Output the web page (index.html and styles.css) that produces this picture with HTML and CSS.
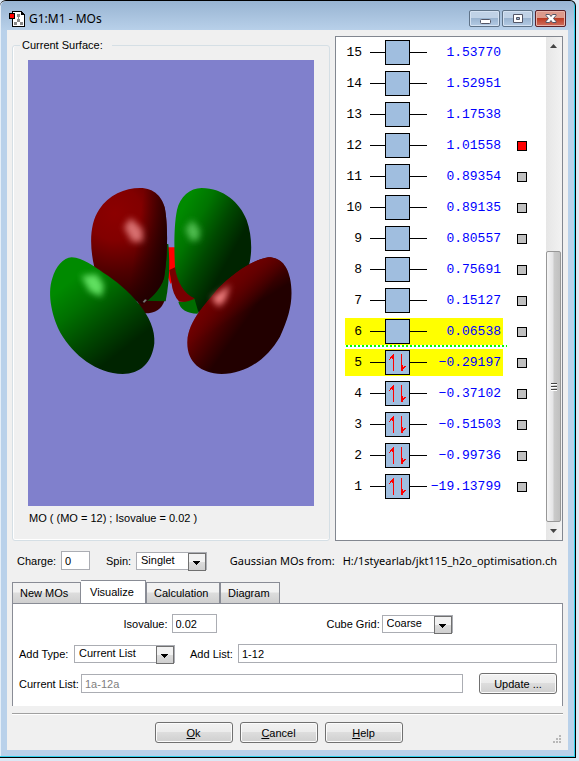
FILE: index.html
```html
<!DOCTYPE html>
<html lang="en">
<head>
  <meta charset="UTF-8" />
  <meta name="viewport" content="width=device-width, initial-scale=1" />
  <title>G1:M1 - MOs</title>
  <link rel="stylesheet" href="styles.css">
</head>
<body>

  <div class="window">
    <header class="titlebar">
      <svg class="app-icon" width="16" height="16" viewBox="0 0 16 16" shape-rendering="crispEdges">
        <path d="M3.5 .5h9l3 3v12h-12z" fill="#fff" stroke="#000" />
        <path d="M12 1h1v1h1v1h1v1h-3z" fill="#000" />
        <path d="M9 5h1v5h-1zM8 9h1v2h-1zM10 9h1v2h-1zM7 11h1v1h-1zM11 11h1v1h-1z" fill="#888" />
        <path d="M8 3h3v3h-3zM8 8h3v3h-3zM5 11h3v3h-3zM11 11h3v3h-3z" fill="#888" />
        <path d="M.5 2.5h5v5h-5z" fill="#f00" stroke="#000" />
      </svg>
      <h1>G1:M1 - MOs</h1>
      <div class="caption-buttons">
        <button type="button" aria-label="Minimize">
          <svg width="12" height="12" viewBox="0 0 12 12"><rect x="1.5" y="6.5" width="10" height="4" rx="1" fill="#fff" stroke="#535666" /></svg>
        </button>
        <button type="button" aria-label="Maximize">
          <svg width="12" height="12" viewBox="0 0 12 12"><path d="M1.5 1.5h9v8h-9zM4.5 4.5v2h3v-2z" fill="#fff" fill-rule="evenodd" stroke="#535666" /></svg>
        </button>
        <button type="button" class="close" aria-label="Close">
          <svg width="12" height="12" viewBox="0 0 12 12"><path d="M1 1.5h3.5l1.5 2 1.5-2h3.5v1l-2.500 3 2.500 3v1h-3.500l-1.500-2-1.500 2h-3.500v-1l2.500-3-2.500-3z" fill="#fff" stroke="#535666" /></svg>
        </button>
      </div>
    </header>

    <main class="client">
      <div class="views">
        <fieldset class="surface">
          <legend>Current Surface:</legend>
          <svg class="scene" viewBox="0 0 286 446" role="img" aria-label="Molecular orbital 12">
            <defs>
              <radialGradient id="redBack" gradientUnits="userSpaceOnUse" cx="225" cy="130" r="270">
                <stop offset="0" stop-color="#8c0000" />
                <stop offset=".3" stop-color="#820000" />
                <stop offset=".65" stop-color="#500000" />
                <stop offset="1" stop-color="#280000" />
              </radialGradient>
              <linearGradient id="redEdge" gradientUnits="userSpaceOnUse" x1="290" y1="200" x2="385" y2="215">
                <stop offset="0" stop-color="#200000" stop-opacity="0" />
                <stop offset="1" stop-color="#200000" />
              </linearGradient>
              <linearGradient id="greenBack" gradientUnits="userSpaceOnUse" x1="420" y1="130" x2="590" y2="225">
                <stop offset="0" stop-color="#008a00" />
                <stop offset=".3" stop-color="#007400" />
                <stop offset=".65" stop-color="#004800" />
                <stop offset="1" stop-color="#002400" />
              </linearGradient>
              <linearGradient id="greenFront" gradientUnits="userSpaceOnUse" x1="95" y1="330" x2="255" y2="535">
                <stop offset="0" stop-color="#008a00" />
                <stop offset=".3" stop-color="#007000" />
                <stop offset=".65" stop-color="#004800" />
                <stop offset="1" stop-color="#002400" />
              </linearGradient>
              <linearGradient id="redFront" gradientUnits="userSpaceOnUse" x1="500" y1="365" x2="620" y2="450">
                <stop offset="0" stop-color="#800000" />
                <stop offset=".35" stop-color="#600000" />
                <stop offset=".75" stop-color="#380000" />
                <stop offset="1" stop-color="#220000" />
              </linearGradient>
              <linearGradient id="redTop" gradientUnits="userSpaceOnUse" x1="640" y1="275" x2="700" y2="370">
                <stop offset="0" stop-color="#6c0000" />
                <stop offset="1" stop-color="#6c0000" stop-opacity="0" />
              </linearGradient>
              <filter id="soft" x="-50%" y="-50%" width="200%" height="200%">
                <feGaussianBlur stdDeviation="9" />
              </filter>
            </defs>
            <g transform="translate(12 110) scale(.3333)">
              <!-- oxygen atom and inner lobes -->
              <path d="M384 232h22v90l-14 20-12-30z" fill="#f00" />
              <path d="M388 300l20-10 65 95-25 12-30-2q-20-20-24-60z" fill="#780000" />
              <path d="M415 395q25 4 52-10l12 20-6 26q-50-2-58-36z" fill="#006c00" />
              <path d="M290 390h84q-12 42-64 40z" fill="#380000" />
              <path d="M376 222h9q8 90-8 172l-68-2z" fill="#005400" />
              <!-- back lobes -->
              <path d="M300 54C345 54 366 84 374 112C384 160 384 255 372 325C360 362 330 388 308 402L240 370L163 292C150 235 146 165 178 118C205 75 255 54 300 54Z" fill="url(#redBack)" />
              <path d="M300 54C345 54 366 84 374 112C384 160 384 255 372 325C360 362 330 388 308 402L240 370L163 292C150 235 146 165 178 118C205 75 255 54 300 54Z" fill="url(#redEdge)" />
              <path d="M485 54C550 54 600 98 620 150C636 195 637 245 628 282L580 370L476 430L463 385C432 370 410 335 405 290C402 230 402 165 411 120C420 80 450 54 485 54Z" fill="url(#greenBack)" />
              <!-- front lobes -->
              <path d="M95 262C130 264 160 288 190 308C265 355 350 440 343 520C336 580 300 612 248 612C170 612 100 555 62 490C38 445 20 375 37 325C47 290 70 263 95 262Z" fill="url(#greenFront)" />
              <path d="M685 262C725 262 743 292 750 325C762 385 750 435 720 500C680 570 615 612 545 612C480 610 440 575 442 515C445 450 500 400 535 355C580 310 640 268 685 262Z" fill="url(#redFront)" />
              <path d="M685 262C725 262 743 292 750 325C762 385 750 435 720 500C680 570 615 612 545 612C480 610 440 575 442 515C445 450 500 400 535 355C580 310 640 268 685 262Z" fill="url(#redTop)" />
              <!-- highlights -->
              <g filter="url(#soft)">
                <path d="M252 172l20-28 35 34 2 36-32 2z" fill="#d87070" />
                <path d="M436 178l20-28 24 30-4 30-24 2z" fill="#50bc50" />
                <path d="M124 318l46-6 22 34-8 34-36-16z" fill="#60e060" />
                <path d="M514 384l56-40-14 46-20 20z" fill="#f08080" />
              </g>
              <path d="M308 396l7-8 6 2-8 8z" fill="#777" />
            </g>
          </svg>
          <p class="caption">MO ( (MO = 12) ; Isovalue = 0.02 )</p>
        </fieldset>

        <div class="mo-list">
          <table>
            <tbody id="orbitals"></tbody>
          </table>
          <div class="scrollbar">
            <button type="button" aria-label="Scroll up"><svg width="7" height="4" viewBox="0 0 7 4"><path d="M0 4l3.500-4 3.500 4z" fill="#444" /></svg></button>
            <div class="track"><div class="thumb"><i></i><i></i><i></i></div></div>
            <button type="button" aria-label="Scroll down"><svg width="7" height="4" viewBox="0 0 7 4"><path d="M0 0l3.500 4 3.500-4z" fill="#444" /></svg></button>
          </div>
        </div>
      </div>

      <div class="state">
        <label for="charge" class="label-charge">Charge:</label>
        <input type="text" id="charge" class="field charge" value="0">
        <label for="spin" class="label-spin">Spin:</label>
        <span class="combo spin"><select id="spin"><option>Singlet</option></select></span>
        <span class="source"><span>Gaussian MOs from:</span> <span>H:/1styearlab/jkt115_h2o_optimisation.ch</span></span>
      </div>

      <div class="tabs" role="tablist">
        <button type="button" role="tab" class="tab-new">New MOs</button>
        <button type="button" role="tab" class="tab-vis active" aria-selected="true">Visualize</button>
        <button type="button" role="tab" class="tab-calc">Calculation</button>
        <button type="button" role="tab" class="tab-diag">Diagram</button>
      </div>

      <section class="panel" role="tabpanel">
        <div class="row centered">
          <div class="pair">
            <label for="iso" class="label-iso">Isovalue:</label>
            <input type="text" id="iso" class="field iso" value="0.02">
          </div>
          <div class="pair">
            <label for="grid" class="label-type">Cube Grid:</label>
            <span class="combo grid"><select id="grid"><option>Coarse</option></select></span>
          </div>
        </div>
        <div class="row">
          <label for="addType" class="label-type">Add Type:</label>
          <span class="combo type"><select id="addType"><option>Current List</option></select></span>
          <label for="addList" class="label-iso">Add List:</label>
          <input type="text" id="addList" class="field wide" value="1-12">
        </div>
        <div class="row">
          <label for="currentList" class="label-current">Current List:</label>
          <input type="text" id="currentList" class="field wide" value="1a-12a" disabled>
          <button type="button" class="push update">Update ...</button>
        </div>
      </section>

      <footer class="actions">
        <button type="button" class="push"><u>O</u>k</button>
        <button type="button" class="push"><u>C</u>ancel</button>
        <button type="button" class="push"><u>H</u>elp</button>
        <svg class="grip" width="8" height="8" viewBox="0 0 8 8" fill="#b8b8b8"><path d="M6 0h2v2h-2zM3 3h2v2h-2zM6 3h2v2h-2zM0 6h2v2h-2zM3 6h2v2h-2zM6 6h2v2h-2z" /></svg>
      </footer>
    </main>
  </div>

  <script>
    const orbitals = [
      [15, '1.53770'], [14, '1.52951'], [13, '1.17538'], [12, '1.01558'], [11, '0.89354'],
      [10, '0.89135'], [9, '0.80557'], [8, '0.75691'], [7, '0.15127'], [6, '0.06538'],
      [5, '−0.29197'], [4, '−0.37102'], [3, '−0.51503'], [2, '−0.99736'], [1, '−19.13799']
    ];
    const shown = 12;

    const electrons = `
      <svg width="23" height="23" viewBox="0 0 23 23" fill="#f00" shape-rendering="crispEdges">
        <path d="M7 3h1v17h-1zM15 3h1v17h-1z" />
        <path d="M7 3v5h-1v-1h-1v1h-1v1h-1v-1h1v-2h1v-1h1v-1h1zM16 20v-6h1v2h1v-1h2v1h-1v1h-1v1h-1v2z" />
      </svg>`;

    document.getElementById('orbitals').innerHTML = orbitals.map(([n, energy]) => {
      const row = n === 6 ? 'lumo' : n === 5 ? 'homo' : '';
      const box = n <= 5 ? electrons : '';
      const mark = n <= 12
        ? `<input type="checkbox" aria-label="Surface for MO ${n}" ${n === shown ? 'checked' : ''}>`
        : '';
      return `
        <tr class="${row}">
          <td class="index">${n}</td>
          <td class="level"><div class="line"><div class="box">${box}</div></div></td>
          <td class="energy">${energy}</td>
          <td class="mark">${mark}</td>
        </tr>`;
    }).join('');
  </script>

</body>
</html>
```

FILE: styles.css
```css
* {
  box-sizing: border-box;
}
body {
  margin: 0;
  padding: 0 3px 3px 0;
  min-height: 100vh;
  display: flex;
  background: #dce8f5;
  color: #000;
  font-family: "Liberation Sans", Arial, sans-serif;
  font-size: 11px;
  line-height: 14px;
}
button, input, select {
  font: inherit;
  color: inherit;
  margin: 0;
}

/* Window frame */
.window {
  flex: 1;
  display: flex;
  flex-direction: column;
  padding: 0 7px 7px 7px;
  background: linear-gradient(#98b4d2, #b9d1ea 30px);
  border: 1px solid #000;
  border-left: 0;
  border-radius: 6px 6px 0 0;
  box-shadow: inset -1px -1px 0 #30d0ec, inset 1px 0 0 #e4eef8;
}
.titlebar {
  display: flex;
  align-items: center;
  height: 29px;
  padding: 6px 2px 0;
}
.titlebar h1 {
  flex: 1;
  margin: 0 0 0 4px;
  font-family: "Noto Sans", "Open Sans", sans-serif;
  font-size: 12px;
  font-weight: normal;
}
.caption-buttons {
  display: flex;
  gap: 2px;
}
.caption-buttons button {
  display: flex;
  align-items: center;
  justify-content: center;
  width: 31px;
  height: 17px;
  padding: 0;
  border: 1px solid #5f7388;
  border-radius: 2px;
  background: linear-gradient(#c0d2e6 50%, #9ab4d0 50%, #b4cbe4);
  box-shadow: inset 0 0 0 1px #d4e2f2;
}
.caption-buttons .close {
  border-color: #5a2028;
  background: linear-gradient(#dc9a8c 50%, #bc3c24 50%, #d07060);
  box-shadow: inset 0 0 0 1px #e8b4aa;
}
.client {
  flex: 1;
  display: flex;
  flex-direction: column;
  padding: 6px 5px 7px;
  background: #f0f0f0;
}

/* Surface view */
.views {
  flex: 1;
  display: flex;
  gap: 5px;
}
.surface {
  flex: 1;
  display: flex;
  flex-direction: column;
  min-width: 0;
  margin: 2px 0 0;
  padding: 8px 15px 15px;
  border: 1px solid #d5dfe5;
  border-radius: 3px;
  box-shadow: inset 1px 0 0 #fff, inset 0 -1px 0 #fff;
}
.surface legend {
  margin-left: -8px;
  padding: 0 9px 0 2px;
}
.scene {
  flex: 1;
  min-height: 0;
  width: 100%;
  background: #8080cc;
}
.caption {
  margin: 5px 0 0 1px;
}

/* Orbital list */
.mo-list {
  display: flex;
  width: 228px;
  border: 1px solid #828790;
  background: #fff;
}
table {
  flex: 1;
  align-self: flex-start;
  border-collapse: collapse;
  font-family: "Liberation Mono", monospace;
  font-size: 13px;
}
td {
  height: 31px;
  padding: 0;
}
.index {
  width: 34px;
  padding-right: 8px;
  text-align: right;
}
.level {
  width: 57px;
}
.line {
  display: flex;
  padding-left: 15px;
  background: linear-gradient(#000, #000) center / 100% 1px no-repeat;
}
.box {
  width: 25px;
  height: 25px;
  border: 1px solid #000;
  background: #a0bedf;
}
.box svg {
  display: block;
}
.energy {
  width: 74px;
  color: #00f;
  text-align: right;
}
.mark {
  padding-left: 16px;
}
.mark input {
  display: block;
  appearance: none;
  width: 10px;
  height: 10px;
  border: 1px solid #000;
  background: #c0c0c0;
}
.mark input:checked {
  background: #f00;
}
.lumo {
  background:
    repeating-linear-gradient(90deg, #0f0 0 2px, #fff 2px 4px) 10px 29px / 161px 2px no-repeat,
    linear-gradient(#ff0, #ff0) 9px 2px / 158px 27px no-repeat;
}
.homo {
  background: linear-gradient(#ff0, #ff0) 9px 2px / 158px 27px no-repeat;
}

.scrollbar {
  display: flex;
  flex-direction: column;
  width: 16px;
  padding: 0 1px 0 0;
  background: linear-gradient(90deg, #e6e6e6, #f2f2f2);
}
.scrollbar button {
  display: flex;
  align-items: center;
  justify-content: center;
  height: 18px;
  padding: 0;
  border: 0;
  background: none;
}
.track {
  flex: 1;
  display: flex;
  align-items: flex-end;
}
.thumb {
  display: flex;
  flex-direction: column;
  align-items: center;
  justify-content: center;
  gap: 1px;
  width: 100%;
  height: 58%;
  border: 1px solid #979797;
  border-radius: 2px;
  background: linear-gradient(90deg, #f5f5f5, #e4e4e6 45%, #cacaca 55%, #c0c0c0);
}
.thumb i {
  width: 6px;
  height: 2px;
  border-top: 1px solid #444;
  background: #fff;
}

/* Text boxes and drop-downs */
.field {
  height: 19px;
  padding: 0 3px;
  border: 1px solid #abadb3;
  border-radius: 0;
  background: #fff;
}
.field:disabled {
  color: #808080;
}
.combo {
  position: relative;
  height: 18px;
}
.combo select {
  display: block;
  appearance: none;
  width: 100%;
  height: 100%;
  padding: 0 18px 2px 4px;
  border: 1px solid #abadb3;
  border-radius: 0;
  background: #fff;
}
.combo::after {
  content: "";
  position: absolute;
  top: 1px;
  right: 1px;
  width: 16px;
  height: 16px;
  border: 1px solid #707070;
  background:
    linear-gradient(#000, #000) 4px 7px / 7px 1px no-repeat,
    linear-gradient(#000, #000) 5px 8px / 5px 1px no-repeat,
    linear-gradient(#000, #000) 6px 9px / 3px 1px no-repeat,
    linear-gradient(#000, #000) 7px 10px / 1px 1px no-repeat,
    linear-gradient(#f2f2f2 50%, #dcdcdc 50%, #cfcfcf);
  pointer-events: none;
}

/* Charge and spin */
.state {
  display: flex;
  align-items: center;
  margin: 10px 6px 0 5px;
  white-space: nowrap;
}
.label-charge {
  width: 44px;
}
.charge {
  width: 29px;
  margin-right: 16px;
}
.label-spin {
  width: 30px;
}
.spin {
  width: 71px;
}
.source {
  display: flex;
  gap: 8px;
  margin-left: auto;
  font-family: "Noto Sans", "Open Sans", sans-serif;
}

/* Tabs */
.tabs {
  display: flex;
  align-items: flex-end;
  margin-top: 10px;
}
.tabs button {
  height: 21px;
  padding: 0 0 0 7px;
  border: 1px solid #898c95;
  border-bottom: 0;
  background: linear-gradient(#f2f2f2 45%, #ddd 50%, #cfcfcf);
  text-align: left;
  white-space: nowrap;
}
.tabs .active {
  height: 24px;
  margin-bottom: -1px;
  padding-left: 9px;
  padding-bottom: 2px;
  border-left: 0;
  background: #fff;
}
.tab-new {
  width: 69px;
}
.tab-vis {
  width: 65px;
}
.tab-calc {
  width: 74px;
}
.tab-diag {
  width: 60px;
}
.panel {
  display: flex;
  flex-direction: column;
  gap: 9px;
  padding: 9px 5px 12px 6px;
  border: 1px solid #898c95;
  border-bottom: 0;
  background: #fff;
}
.row {
  display: flex;
  align-items: center;
  height: 21px;
}
.row.centered {
  justify-content: center;
  gap: 110px;
}
.pair {
  display: flex;
  align-items: center;
}
.label-iso {
  width: 48px;
}
.label-type {
  width: 55px;
}
.label-current {
  width: 62px;
}
.iso {
  width: 45px;
}
.grid {
  width: 71px;
}
.type {
  width: 101px;
  margin-right: 15px;
}
.wide {
  flex: 1;
  min-width: 0;
}
.push {
  width: 78px;
  height: 21px;
  padding: 0;
  border: 1px solid #707070;
  border-radius: 3px;
  background: linear-gradient(#f2f2f2, #ebebeb 50%, #ddd 50%, #cfcfcf);
  box-shadow: inset 0 0 0 1px #fbfbfb;
}
.update {
  margin-left: 16px;
}

/* Dialog buttons */
.actions {
  position: relative;
  display: flex;
  justify-content: center;
  gap: 7px;
  margin-top: 7px;
  padding: 8px 18px 0 0;
  border-top: 1px solid #a0a0a0;
  box-shadow: inset 0 1px 0 #fff;
}
.grip {
  position: absolute;
  right: 2px;
  bottom: 0;
}
```
